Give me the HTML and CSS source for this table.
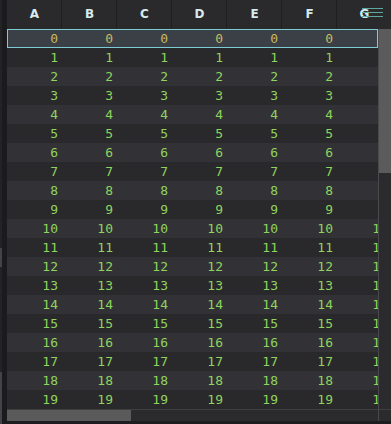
FILE: index.html
```html
<!DOCTYPE html>
<html>
<head>
<meta charset="utf-8">
<link rel="stylesheet" href="styles.css">
</head>
<body>
<div class="app">
  <div class="gutter">
    <div class="mark mark-a"></div>
    <div class="mark mark-b"></div>
  </div>
  <div class="main">
    <div class="header">
      <div class="hcell">A</div><div class="hcell">B</div><div class="hcell">C</div><div class="hcell">D</div><div class="hcell">E</div><div class="hcell">F</div><div class="hcell">G</div>
      <svg class="menu" width="22" height="12" viewBox="0 0 22 12"><path d="M0 0.5H21M0 4.5H21M0 8.5H21" stroke="#5ea99f" stroke-width="1" fill="none"/></svg>
    </div>
    <div class="viewport" id="vp"></div>
    <div class="vscroll"><div class="vthumb"></div></div>
    <div class="hscroll"><div class="hthumb"></div></div>
    <div class="corner"></div>
    <div class="foot"></div>
  </div>
</div>
<script>
var vp=document.getElementById('vp');
for(var i=0;i<20;i++){
  var r=document.createElement('div');
  r.className='row '+(i===0?'sel':(i%2?'odd':'even'));
  for(var c=0;c<7;c++){
    var d=document.createElement('div');
    d.className='cell';
    d.textContent=i;
    r.appendChild(d);
  }
  vp.appendChild(r);
}
</script>
</body>
</html>
```
FILE: styles.css
```css
html, body {
  margin: 0;
  padding: 0;
  background: #1d1c1f;
  width: 391px;
  height: 424px;
  overflow: hidden;
}
.app {
  display: flex;
  height: 424px;
}
.gutter {
  width: 7px;
  flex-shrink: 0;
  background: #1b1a1d;
  border-left: 2px solid #232226;
  box-sizing: border-box;
  position: relative;
}
.mark {
  position: absolute;
  left: -2px;
  width: 2px;
  background: #444448;
}
.mark-a { top: 248px; height: 19px; }
.mark-b { top: 372px; height: 52px; }
.main {
  width: 384px;
  display: grid;
  grid-template-columns: 371px 13px;
  grid-template-rows: 29px 380px 12px 3px;
}
.header {
  grid-column: 1 / 3;
  display: flex;
  overflow: hidden;
  position: relative;
  background: #2a292c;
}
.hcell {
  width: 55px;
  flex-shrink: 0;
  box-sizing: border-box;
  border-right: 1px solid #1f1e21;
  text-align: center;
  font-family: "DejaVu Sans", sans-serif;
  font-weight: bold;
  font-size: 12px;
  line-height: 29px;
  color: #d6ebef;
  padding-left: 1px;
}
.menu {
  position: absolute;
  left: 355px;
  top: 8px;
}
.viewport {
  overflow: hidden;
}
.row {
  display: flex;
  height: 19px;
  width: 371px;
  overflow: hidden;
  box-sizing: border-box;
}
.odd { background: #29282b; }
.even { background: #323135; }
.sel {
  background: #3a4046;
  box-shadow: inset 0 0 0 1px #7ccbd4;
}
.cell {
  width: 55px;
  flex-shrink: 0;
  box-sizing: border-box;
  text-align: right;
  padding-right: 4px;
  font-family: "DejaVu Sans Mono", monospace;
  font-size: 13px;
  line-height: 19px;
  color: #8ed45e;
}
.sel .cell { color: #c9b95f; }
.vscroll {
  background: #2b2a2d;
  border-left: 1px solid #4a4a4c;
}
.vthumb {
  height: 144px;
  background: #5b5b5b;
}
.hscroll {
  background: #2b2a2d;
  border-top: 1px solid #3e3e40;
  box-sizing: border-box;
}
.hthumb {
  width: 124px;
  height: 11px;
  background: #5a5a5a;
}
.corner {
  background: #2b2a2d;
  border-left: 1px solid #4a4a4c;
  border-top: 1px solid #3e3e40;
  box-sizing: border-box;
}
.foot {
  grid-column: 1 / 3;
  background: #1d1c1f;
}
```
